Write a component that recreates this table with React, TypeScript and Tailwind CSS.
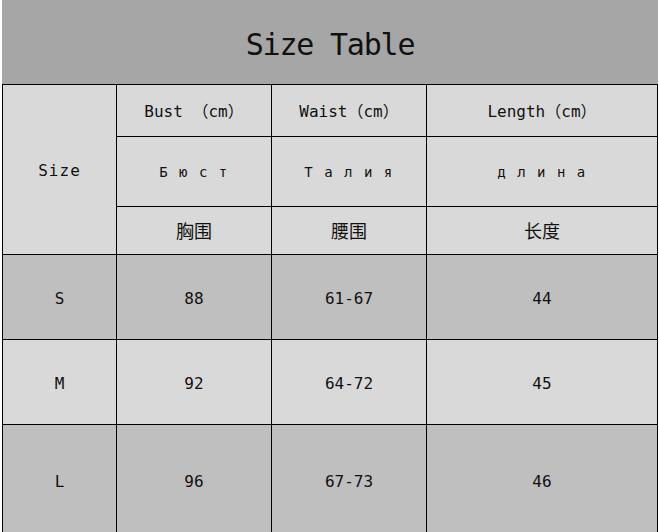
const mono = "font-['DejaVu_Sans_Mono','Noto_Sans_CJK_SC',monospace]"
const cjk = "font-['Noto_Sans_CJK_SC',sans-serif]"

const rows = [
    { size: 'S', bust: '88', waist: '61-67', length: '44', bg: 'bg-[#bfbfbf]' },
    { size: 'M', bust: '92', waist: '64-72', length: '45', bg: 'bg-[#d9d9d9]' },
    { size: 'L', bust: '96', waist: '67-73', length: '46', bg: 'bg-[#bfbfbf]' },
]

function Cell({ className = '', children }: { className?: string; children?: React.ReactNode }) {
    return (
        <div className={`flex items-center justify-center text-[#111] ${className}`}>
            {children}
        </div>
    )
}

export default function App() {
    return (
        <div className="w-[659px] h-[532px] overflow-hidden bg-white">
            <div className="ml-[2px] w-[656px]">
                <div className={`h-[84px] pt-[5px] bg-[#a6a6a6] flex items-center justify-center text-[30px] tracking-[-1.2px] text-[#111] ${mono}`}>
                    Size Table
                </div>
                <div className="grid grid-cols-[113px_154px_154px_230px] grid-rows-[51px_69px_47px_84px_84px_111px] gap-px bg-black p-px pb-0">
                    <Cell className={`row-span-3 pt-[3px] bg-[#d9d9d9] text-[16px] tracking-[1px] ${mono}`}>Size</Cell>
                    <Cell className={`pt-[3px] bg-[#d9d9d9] text-[16px] ${mono}`}>Bust （cm）</Cell>
                    <Cell className={`pt-[3px] bg-[#d9d9d9] text-[16px] ${mono}`}>Waist（cm）</Cell>
                    <Cell className={`pt-[3px] bg-[#d9d9d9] text-[16px] ${mono}`}>Length（cm）</Cell>

                    <Cell className={`pt-[2px] bg-[#d9d9d9] text-[14px] tracking-[1.5px] ${mono}`}>Б ю с т</Cell>
                    <Cell className={`pt-[2px] bg-[#d9d9d9] text-[14px] tracking-[1.5px] ${mono}`}>Т а л и я</Cell>
                    <Cell className={`pt-[2px] bg-[#d9d9d9] text-[14px] tracking-[1.5px] ${mono}`}>д л и н а</Cell>

                    <Cell className={`bg-[#d9d9d9] text-[18px] ${cjk}`}>胸围</Cell>
                    <Cell className={`bg-[#d9d9d9] text-[18px] ${cjk}`}>腰围</Cell>
                    <Cell className={`bg-[#d9d9d9] text-[18px] ${cjk}`}>长度</Cell>

                    {rows.map((r) => (
                        <>
                            <Cell key={r.size + 's'} className={`pt-[3px] ${r.bg} text-[16px] ${mono}`}>{r.size}</Cell>
                            <Cell key={r.size + 'b'} className={`pt-[3px] ${r.bg} text-[16px] ${mono}`}>{r.bust}</Cell>
                            <Cell key={r.size + 'w'} className={`pt-[3px] ${r.bg} text-[16px] ${mono}`}>{r.waist}</Cell>
                            <Cell key={r.size + 'l'} className={`pt-[3px] ${r.bg} text-[16px] ${mono}`}>{r.length}</Cell>
                        </>
                    ))}
                </div>
            </div>
        </div>
    )
}
